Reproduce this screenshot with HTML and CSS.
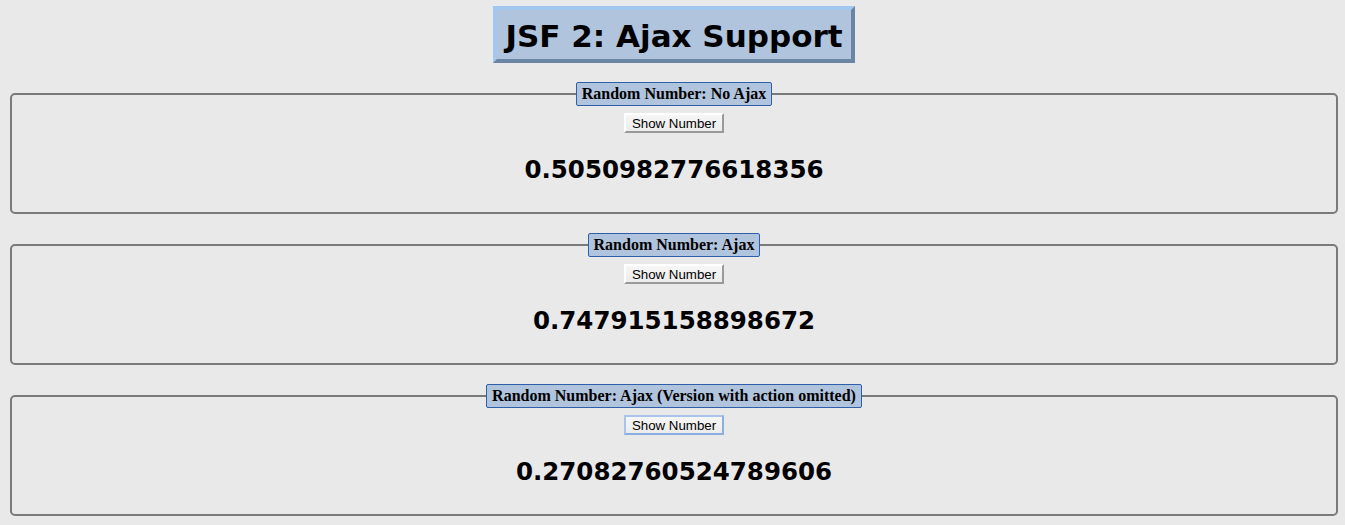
FILE: index.html
```html
<!DOCTYPE html>
<html>
<head>
<meta charset="utf-8">
<title>JSF 2: Ajax Support</title>
<link rel="stylesheet" href="styles.css">
</head>
<body>
<div class="title-wrap">
  <h1 class="title">JSF 2: Ajax Support</h1>
</div>

<fieldset class="panel">
  <legend class="panel-legend">Random Number: No Ajax</legend>
  <div class="panel-body">
    <button class="btn" type="button">Show Number</button>
    <h2 class="result">0.5050982776618356</h2>
  </div>
</fieldset>

<fieldset class="panel">
  <legend class="panel-legend">Random Number: Ajax</legend>
  <div class="panel-body">
    <button class="btn" type="button">Show Number</button>
    <h2 class="result">0.747915158898672</h2>
  </div>
</fieldset>

<fieldset class="panel">
  <legend class="panel-legend">Random Number: Ajax (Version with action omitted)</legend>
  <div class="panel-body">
    <button class="btn btn-focus" type="button">Show Number</button>
    <h2 class="result">0.27082760524789606</h2>
  </div>
</fieldset>
</body>
</html>
```

FILE: styles.css
```css
html, body {
  margin: 0;
  background: #e9e9e9;
}
body {
  padding: 6px 7px 0 10px;
  font-family: "Liberation Serif", serif;
  color: #000;
}
.title-wrap {
  display: flex;
  justify-content: center;
}
.title {
  margin: 0;
  box-sizing: border-box;
  width: 362px;
  height: 57px;
  padding-top: 3px;
  display: flex;
  align-items: center;
  justify-content: center;
  background: #b0c4de;
  border: 4px solid;
  border-color: #a3c8ef #6b86a4 #6b86a4 #a3c8ef;
  font-family: "DejaVu Sans", Verdana, sans-serif;
  font-weight: bold;
  font-size: 31px;
  line-height: 1;
}
.panel {
  margin: 19px 0 0 0;
  padding: 0;
  border: 2px solid #7a7a7a;
  border-radius: 5px;
  min-width: 0;
}
.panel + .panel {
  margin-top: 19px;
}
.panel-legend {
  margin: 0 auto;
  padding: 0 5px;
  height: 24px;
  box-sizing: border-box;
  display: flex;
  align-items: center;
  background: #b0c4de;
  border: 1px solid #2f5fa8;
  border-radius: 2px;
  font-family: "Liberation Serif", serif;
  font-weight: bold;
  font-size: 16px;
}
.panel-body {
  display: flex;
  flex-direction: column;
  align-items: center;
  padding-top: 7px;
  height: 106px;
  box-sizing: border-box;
}
.btn {
  width: 100px;
  height: 20px;
  box-sizing: border-box;
  padding: 0;
  background: linear-gradient(#f6f6f6, #ececec);
  border: 2px solid;
  border-color: #ffffff #9a9a9a #9a9a9a #ffffff;
  font-family: "Liberation Sans", Arial, sans-serif;
  font-size: 13.3px;
  color: #000;
}
.btn-focus {
  border-color: #a9c4ea #8aaee0 #8aaee0 #a9c4ea;
}
.result {
  margin: 22px 0 0 0;
  font-family: "DejaVu Sans", Verdana, sans-serif;
  font-weight: bold;
  font-size: 24.5px;
  line-height: 30px;
}
```
